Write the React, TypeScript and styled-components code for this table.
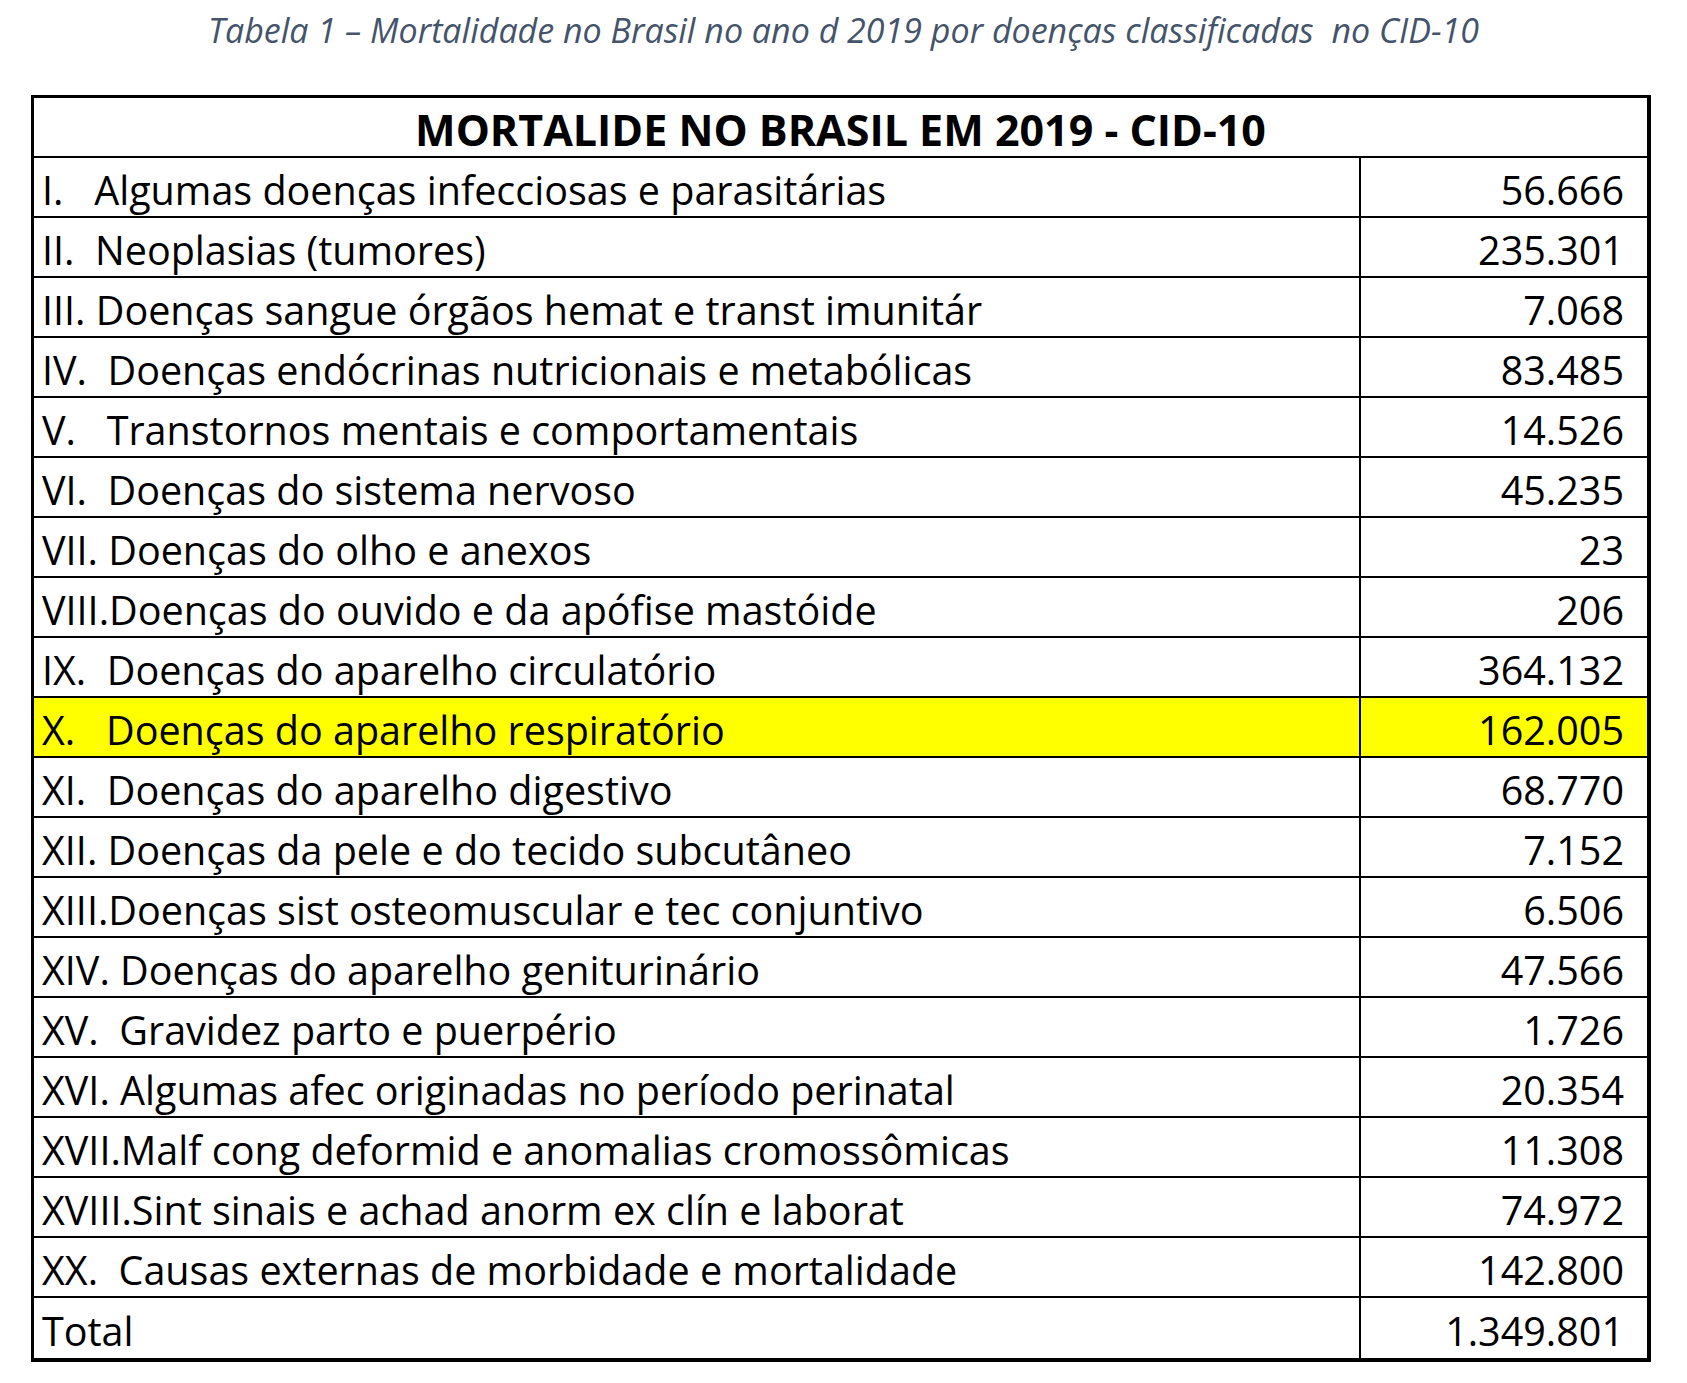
import React from "react";
import styled, { createGlobalStyle } from "styled-components";

const GlobalStyle = createGlobalStyle`
  html, body {
    margin: 0;
    padding: 0;
    background: #ffffff;
  }
  body {
    font-family: "Open Sans", Lato, "Liberation Sans", sans-serif;
    color: #000000;
  }
`;

const Page = styled.div`
  width: 1687px;
  min-height: 1383px;
  box-sizing: border-box;
  padding-top: 10px;
  background: #ffffff;
`;

const Caption = styled.div`
  font-family: "Open Sans", Lato, sans-serif;
  font-style: italic;
  font-size: 34px;
  line-height: 40px;
  height: 40px;
  color: #44546a;
  text-align: center;
  white-space: pre;
`;

const Table = styled.div`
  margin: 45px 0 0 31px;
  width: 1620px;
  box-sizing: border-box;
  border-style: solid;
  border-color: #000000;
  border-width: 3px 4px 4px 3px;
  display: grid;
  grid-template-columns: 1fr 286px;
`;

const HeaderCell = styled.div`
  grid-column: 1 / span 2;
  height: 60px;
  border-bottom: 2px solid #000000;
  display: flex;
  align-items: center;
  justify-content: center;
  padding-top: 5px;
  box-sizing: border-box;
  font-weight: 700;
  font-size: 43px;
  line-height: 1.2;
  white-space: pre;
`;

const Cell = styled.div<{ $highlight?: boolean; $last?: boolean }>`
  height: 60px;
  box-sizing: border-box;
  border-bottom: ${(p) => (p.$last ? "none" : "2px solid #000000")};
  background: ${(p) => (p.$highlight ? "#ffff00" : "transparent")};
  display: flex;
  align-items: center;
  padding-top: 8px;
  font-size: 39.5px;
  line-height: 1.2;
  white-space: pre;
`;

const LabelCell = styled(Cell)`
  border-right: 2px solid #000000;
  padding-left: 8px;
`;

const ValueCell = styled(Cell)`
  justify-content: flex-end;
  padding-right: 23px;
`;

type Row = { label: string; value: string; highlight?: boolean };

const rows: Row[] = [
  { label: "I.   Algumas doenças infecciosas e parasitárias", value: "56.666" },
  { label: "II.  Neoplasias (tumores)", value: "235.301" },
  { label: "III. Doenças sangue órgãos hemat e transt imunitár", value: "7.068" },
  { label: "IV.  Doenças endócrinas nutricionais e metabólicas", value: "83.485" },
  { label: "V.   Transtornos mentais e comportamentais", value: "14.526" },
  { label: "VI.  Doenças do sistema nervoso", value: "45.235" },
  { label: "VII. Doenças do olho e anexos", value: "23" },
  { label: "VIII.Doenças do ouvido e da apófise mastóide", value: "206" },
  { label: "IX.  Doenças do aparelho circulatório", value: "364.132" },
  { label: "X.   Doenças do aparelho respiratório", value: "162.005", highlight: true },
  { label: "XI.  Doenças do aparelho digestivo", value: "68.770" },
  { label: "XII. Doenças da pele e do tecido subcutâneo", value: "7.152" },
  { label: "XIII.Doenças sist osteomuscular e tec conjuntivo", value: "6.506" },
  { label: "XIV. Doenças do aparelho geniturinário", value: "47.566" },
  { label: "XV.  Gravidez parto e puerpério", value: "1.726" },
  { label: "XVI. Algumas afec originadas no período perinatal", value: "20.354" },
  { label: "XVII.Malf cong deformid e anomalias cromossômicas", value: "11.308" },
  { label: "XVIII.Sint sinais e achad anorm ex clín e laborat", value: "74.972" },
  { label: "XX.  Causas externas de morbidade e mortalidade", value: "142.800" },
  { label: "Total", value: "1.349.801" },
];

export default function App() {
  return (
    <>
      <GlobalStyle />
      <Page>
        <Caption>Tabela 1 – Mortalidade no Brasil no ano d 2019 por doenças classificadas  no CID-10</Caption>
        <Table>
          <HeaderCell>MORTALIDE NO BRASIL EM 2019 - CID-10</HeaderCell>
          {rows.map((r, i) => {
            const last = i === rows.length - 1;
            return (
              <React.Fragment key={r.label}>
                <LabelCell $highlight={r.highlight} $last={last}>
                  {r.label}
                </LabelCell>
                <ValueCell $highlight={r.highlight} $last={last}>
                  {r.value}
                </ValueCell>
              </React.Fragment>
            );
          })}
        </Table>
      </Page>
    </>
  );
}
